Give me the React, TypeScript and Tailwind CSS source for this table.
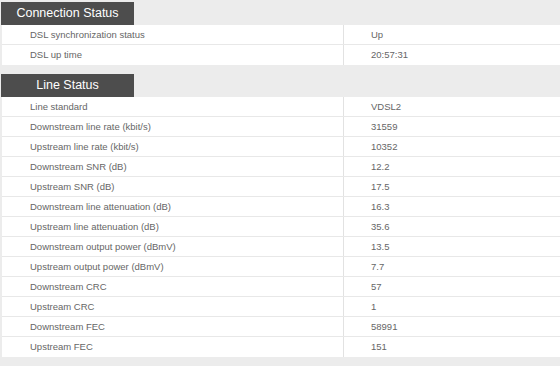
import React from "react";

type Row = [string, string];

const connection: Row[] = [
  ["DSL synchronization status", "Up"],
  ["DSL up time", "20:57:31"],
];

const line: Row[] = [
  ["Line standard", "VDSL2"],
  ["Downstream line rate (kbit/s)", "31559"],
  ["Upstream line rate (kbit/s)", "10352"],
  ["Downstream SNR (dB)", "12.2"],
  ["Upstream SNR (dB)", "17.5"],
  ["Downstream line attenuation (dB)", "16.3"],
  ["Upstream line attenuation (dB)", "35.6"],
  ["Downstream output power (dBmV)", "13.5"],
  ["Upstream output power (dBmV)", "7.7"],
  ["Downstream CRC", "57"],
  ["Upstream CRC", "1"],
  ["Downstream FEC", "58991"],
  ["Upstream FEC", "151"],
];

function Section({ title, rows }: { title: string; rows: Row[] }) {
  return (
    <section>
      <div className="flex h-[23px] w-[133px] items-center justify-center bg-[#4d4d4d] text-[12.5px] text-white">
        {title}
      </div>
      <div className="ml-[1px] bg-white">
        {rows.map(([label, value], i) => (
          <div
            key={label}
            className={`grid h-[20px] grid-cols-[341px_1fr] items-stretch ${
              i < rows.length - 1 ? "border-b border-[#e8e8e8]" : ""
            }`}
          >
            <div className="flex items-center pt-[1px] pl-[28px]">{label}</div>
            <div className="flex items-center border-l border-[#e2e2e2] pt-[1px] pl-[27px]">{value}</div>
          </div>
        ))}
      </div>
    </section>
  );
}

export default function App() {
  return (
    <div
      className="flex h-[366px] flex-col gap-[9px] overflow-hidden bg-[#ececec] pl-[1px] pt-[2px] text-[9.5px] text-[#666666]"
      style={{ fontFamily: '"Liberation Sans", Arial, sans-serif' }}
    >
      <Section title="Connection Status" rows={connection} />
      <Section title="Line Status" rows={line} />
    </div>
  );
}
